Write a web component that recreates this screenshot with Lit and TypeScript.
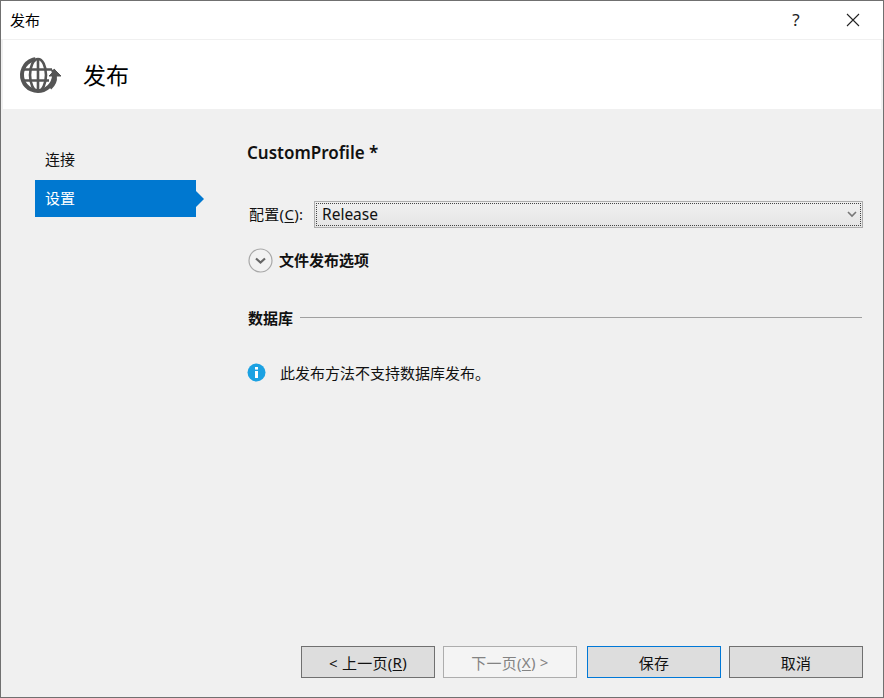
import { LitElement, html, css } from "lit";
import { customElement } from "lit/decorators.js";

@customElement("app-root")
export class AppRoot extends LitElement {
  static styles = css`
    :host {
      display: block;
      width: 884px;
      height: 698px;
      box-sizing: border-box;
      border: 1px solid #707070;
      background: #f0f0f0;
      font-family: "Noto Sans", "Noto Sans CJK SC", sans-serif;
      font-size: 15px;
      color: #111;
      overflow: hidden;
    }
    .win { display: flex; flex-direction: column; height: 100%; }
    .title {
      height: 38px; background: #fff; display: flex; align-items: center;
      padding: 0 0 2px 9px; box-sizing: border-box; font-size: 15px; color: #000; flex: none;
    }
    .title .sp { flex: 1; }
    .help { width: 14px; margin-right: 43px; font-size: 17px; text-align: center; color: #222; }
    .close { display: block; margin: 2px 23px 0 0; }
    .head {
      height: 69px; margin: 1px 2px 0; background: #fff; display: flex; align-items: center;
      padding-left: 15px; flex: none;
    }
    .head svg { display: block; margin-right: 19px; }
    .head span { font-size: 23px; color: #000; line-height: 34px; }
    .body { flex: 1; display: flex; min-height: 0; }
    .nav { width: 246px; flex: none; padding: 32px 0 0 34px; box-sizing: border-box; }
    .nav-item { width: 161px; height: 37px; display: flex; align-items: center; padding: 0 0 2px 10px; box-sizing: border-box; margin-bottom: 2px; position: relative; }
    .nav-item.on { background: #0078d0; color: #fff; }
    .nav-item.on::after {
      content: ""; position: absolute; left: 161px; top: 11px;
      border-left: 8px solid #0078d0; border-top: 8px solid transparent; border-bottom: 8px solid transparent;
    }
    .main { flex: 1; display: flex; flex-direction: column; padding-right: 21px; min-width: 0; }
    .profile { font-size: 17px; font-weight: 600; color: #111; margin-top: 32px; height: 24px; line-height: 24px; }
    .row { display: flex; align-items: center; margin-top: 36px; height: 27px; }
    .row label { width: 67px; padding: 0 0 2px 2px; box-sizing: border-box; flex: none; white-space: nowrap; letter-spacing: 0.3px; }
    u { text-underline-offset: 2px; }
    .select {
      flex: 1; height: 27px; box-sizing: border-box; border: 1px solid #adadad;
      background: linear-gradient(#f0f0f0, #e5e5e5); padding: 1px; margin-right: -1px;
    }
    .select-in {
      height: 100%; box-sizing: border-box; border: 1px dotted #444; display: flex; align-items: center;
      justify-content: space-between; padding: 0 3px 2px 5px; font-size: 15.5px;
    }
    .select svg { display: block; margin-top: 2px; }
    .expander { display: flex; align-items: center; gap: 6px; margin-top: 19px; height: 25px; font-weight: 700; font-size: 15px; color: #111; }
    .expander svg { display: block; margin: 1px 0 0 1px; }
    .group { display: flex; align-items: center; gap: 7px; margin-top: 33px; height: 24px; font-weight: 700; font-size: 15px; margin-left: 1px; }
    .group i { flex: 1; height: 1px; background: #a0a0a0; }
    .info { display: flex; align-items: center; gap: 14px; margin-top: 31px; height: 24px; }
    .info svg { display: block; }
    .foot { flex: none; height: 51px; display: flex; padding-left: 300px; align-items: flex-start; }
    .btn {
      width: 134px; height: 32px; box-sizing: border-box; border: 1px solid #707070; background: #dddddd;
      display: flex; align-items: center; justify-content: center; color: #111; font-size: 15px; margin-right: 8px; letter-spacing: 0.25px;
    }
    .btn.dis { background: #f4f4f4; border-color: #adadad; color: #838383; margin-right: 10px; }
    .btn.def { border: 1px solid #0078d7; }
  `;

  render() {
    return html`<div class="win">
      <div class="title">
        <span>发布</span><span class="sp"></span>
        <span class="help">?</span>
        <svg class="close" width="14" height="14" viewBox="0 0 14 14"><path d="M1 1l12 12M13 1L1 13" stroke="#222" stroke-width="1.1" fill="none"/></svg>
      </div>
      <div class="head">
        <svg width="46" height="40" viewBox="0 0 46 40" fill="none" stroke="#555">
          <circle cx="20" cy="20" r="16" stroke-width="4" stroke-dasharray="78 23" transform="rotate(-20 20 20)"/>
          <ellipse cx="20" cy="20" rx="8" ry="16" stroke-width="2.6"/>
          <path d="M20 4v32M5 14.500h29M5 25.500h26" stroke-width="2.6"/>
          <path d="M32 33c4-3.500 5.500-8 5-12" stroke-width="3.800"/>
          <path d="M31 21l6-6 6 6z" fill="#555" stroke-width="1"/>
        </svg>
        <span>发布</span>
      </div>
      <div class="body">
        <div class="nav">
          <div class="nav-item">连接</div>
          <div class="nav-item on">设置</div>
        </div>
        <div class="main">
          <div class="profile">CustomProfile *</div>
          <div class="row">
            <label>配置(<u>C</u>):</label>
            <div class="select"><div class="select-in"><span>Release</span>
              <svg width="10" height="7" viewBox="0 0 10 7"><path d="M1 1l4 4 4-4" stroke="#777" stroke-width="1.6" fill="none"/></svg>
            </div></div>
          </div>
          <div class="expander">
            <svg width="25" height="25" viewBox="0 0 25 25" fill="none"><circle cx="12.500" cy="12.500" r="11.500" stroke="#a8a8a8" stroke-width="1.2" fill="#f2f2f2"/><path d="M8 10.500l4.500 4 4.500-4" stroke="#666" stroke-width="2.200"/></svg>
            <span>文件发布选项</span>
          </div>
          <div class="group"><span>数据库</span><i></i></div>
          <div class="info">
            <svg width="19" height="19" viewBox="0 0 19 19"><circle cx="9.500" cy="9.500" r="9" fill="#1ba1e2"/><rect x="8" y="8" width="3" height="7" fill="#fff"/><rect x="8" y="4" width="3" height="2.600" fill="#fff"/></svg>
            <span>此发布方法不支持数据库发布。</span>
          </div>
        </div>
      </div>
      <div class="foot">
        <div class="btn">&lt; 上一页(<u>R</u>)</div>
        <div class="btn dis">下一页(<u>X</u>) &gt;</div>
        <div class="btn def">保存</div>
        <div class="btn">取消</div>
      </div>
    </div>`;
  }
}
